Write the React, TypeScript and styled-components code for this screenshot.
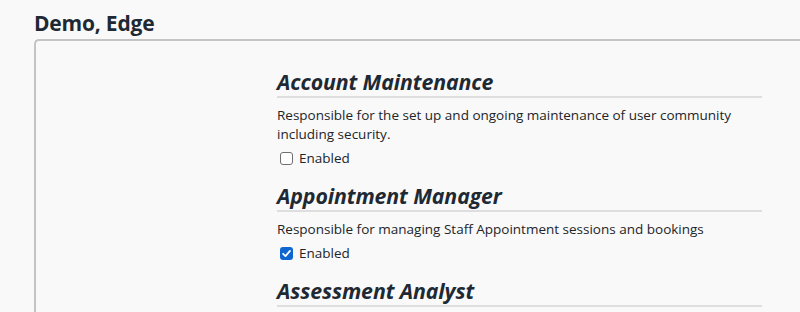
import React from "react"
import styled, { createGlobalStyle } from "styled-components"

const GlobalStyle = createGlobalStyle`
  html, body {
    margin: 0;
    padding: 0;
    background: #f9f9f9;
    font-family: "Open Sans", "Noto Sans", sans-serif;
    color: #212529;
  }
`

interface Role {
  name: string
  description: string
  enabled: boolean
}

const ROLES: Role[] = [
  {
    name: "Account Maintenance",
    description:
      "Responsible for the set up and ongoing maintenance of user community including security.",
    enabled: false,
  },
  {
    name: "Appointment Manager",
    description: "Responsible for managing Staff Appointment sessions and bookings",
    enabled: true,
  },
  {
    name: "Assessment Analyst",
    description: "Responsible for analysing assessment results",
    enabled: false,
  },
]

const Check = () => (
  <svg width="11" height="11" viewBox="0 0 12 12">
    <path
      d="M2.3 6.3 L4.9 8.9 L9.8 3.2"
      fill="none"
      stroke="#fff"
      strokeWidth="1.9"
      strokeLinecap="round"
      strokeLinejoin="round"
    />
  </svg>
)

const App = () => {
  return (
    <>
      <GlobalStyle />
      <StyledPage>
        <StyledUserName>Demo, Edge</StyledUserName>
        <StyledPanel>
          <div />
          <StyledRoleList>
            {ROLES.map(role => (
              <StyledRole key={role.name}>
                <StyledRoleTitle>{role.name}</StyledRoleTitle>
                <StyledDescription>{role.description}</StyledDescription>
                <StyledCheckLabel>
                  <StyledBox $checked={role.enabled}>
                    {role.enabled && <Check />}
                  </StyledBox>
                  Enabled
                </StyledCheckLabel>
              </StyledRole>
            ))}
          </StyledRoleList>
        </StyledPanel>
      </StyledPage>
    </>
  )
}

export default App

const StyledPage = styled.div`
  padding: 9px 0 0 34px;
  height: 312px;
  box-sizing: border-box;
  overflow: hidden;
`
const StyledUserName = styled.h1`
  font-size: 21px;
  font-weight: 700;
  line-height: 28px;
  margin: 0 0 2px;
  color: #1e2933;
  letter-spacing: -0.2px;
`
const StyledPanel = styled.div`
  display: grid;
  grid-template-columns: 241px 485px;
  border: 2px solid #c4c4c4;
  border-right: none;
  border-radius: 5px 0 0 0;
  width: 900px;
  padding-top: 28px;
  min-height: 400px;
  box-sizing: border-box;
`
const StyledRoleList = styled.div`
  display: flex;
  flex-direction: column;
`
const StyledRole = styled.section`
  display: flex;
  flex-direction: column;
  margin-bottom: 15px;
`
const StyledRoleTitle = styled.h2`
  font-size: 21.3px;
  font-weight: 700;
  font-style: italic;
  line-height: 26px;
  margin: 0;
  padding-bottom: 1px;
  border-bottom: 2px solid #dedede;
  color: #1e2933;
  letter-spacing: -0.1px;
`
const StyledDescription = styled.p`
  font-size: 13.5px;
  line-height: 19px;
  margin: 8px 0 5px;
`
const StyledCheckLabel = styled.label`
  display: flex;
  align-items: center;
  gap: 6px;
  font-size: 13.5px;
  line-height: 19px;
  padding-left: 3px;
`
const StyledBox = styled.span<{ $checked: boolean }>`
  width: 13px;
  height: 13px;
  box-sizing: border-box;
  border-radius: 3px;
  display: flex;
  align-items: center;
  justify-content: center;
  border: ${p => (p.$checked ? "none" : "1px solid #6e6e6e")};
  background: ${p => (p.$checked ? "#0f66d0" : "#fff")};
`
